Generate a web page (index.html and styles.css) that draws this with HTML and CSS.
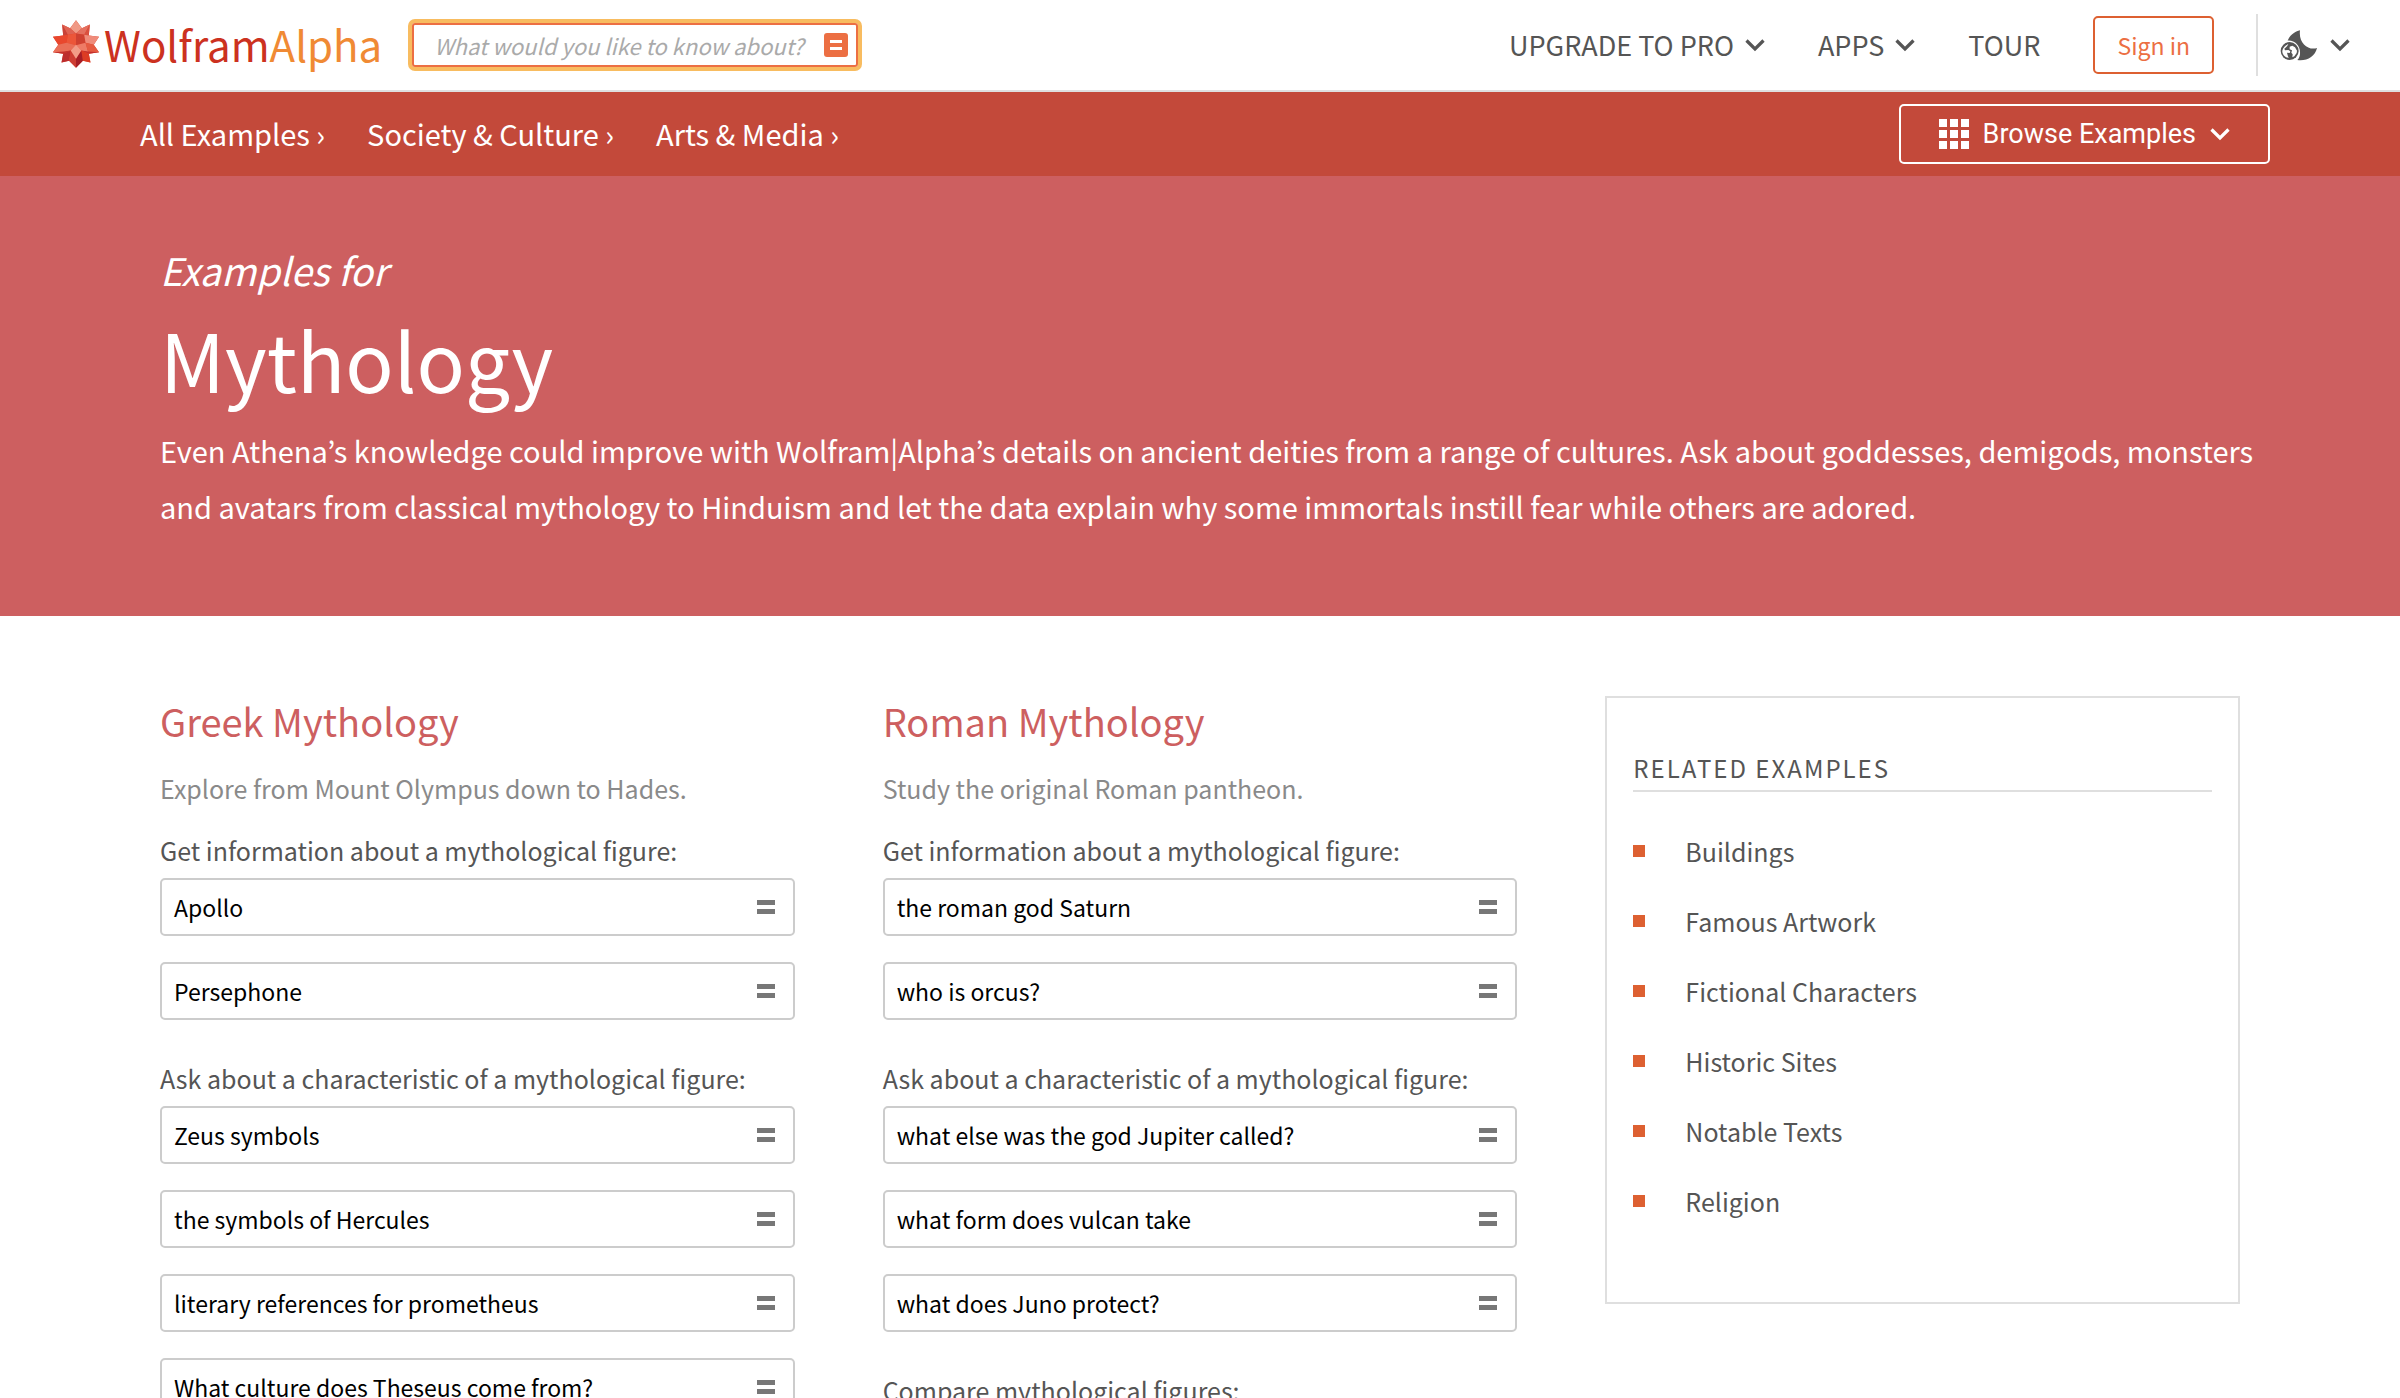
FILE: index.html
```html
<!DOCTYPE html>
<html lang="en">
<head>
<meta charset="utf-8">
<meta name="viewport" content="width=device-width, initial-scale=1">
<title>Wolfram|Alpha Examples: Mythology</title>
<link rel="stylesheet" href="styles.css">
</head>
<body>
<svg class="symbols" width="0" height="0" aria-hidden="true">
  <symbol id="chevron" viewBox="0 0 20 14"><path d="M1.5 2.5 10 11l8.500-8.500" fill="none" stroke="currentColor" stroke-width="3.200"/></symbol>
  <symbol id="equals" viewBox="0 0 18 14"><path d="M0 0h18v5H0zM0 9h18v5H0z" fill="currentColor"/></symbol>
</svg>

<header class="site-header">
  <a class="logo" href="#" aria-label="WolframAlpha">
    <svg class="logo-star" viewBox="10 9 146 150" aria-hidden="true">
      <path fill="#de4630" d="M83 12 101 36 125 25 122 58 153 62 137 86 153 109 122 114 127 140 104 135 83 156 62 135 39 140 44 114 13 109 29 86 13 62 44 58 41 25 65 36z"/>
      <path fill="#f09985" d="M83 12 101 36 83 52 65 36z"/>
      <path fill="#e4705f" d="M125 25 101 36 83 52 108 56z"/>
      <path fill="#d9503f" d="M125 25 122 58 108 56z"/>
      <path fill="#df6252" d="M41 25 65 36 83 52 58 56z"/>
      <path fill="#c94238" d="M41 25 44 58 58 56z"/>
      <path fill="#cf4131" d="M83 52 108 56 112 80 83 88z"/>
      <path fill="#ec5639" d="M83 52 58 56 54 80 83 88z"/>
      <path fill="#ef8b7a" d="M153 62 122 58 108 56 112 80 137 86z"/>
      <path fill="#e9472d" d="M13 62 44 58 58 56 54 80 29 86z"/>
      <path fill="#ea6f58" d="M54 80 83 88 67 104 46 109 13 109 29 86z"/>
      <path fill="#ee7b66" d="M112 80 83 88 99 104 120 109z"/>
      <path fill="#e55a41" d="M112 80 137 86 153 109 120 109z"/>
      <path fill="#c4312c" d="M153 109 122 114 99 104 120 107z"/>
      <path fill="#c4312c" d="M13 109 44 114 67 104 46 107z"/>
      <path fill="#dc3c24" d="M127 140 122 114 99 104 104 135z"/>
      <path fill="#bc2d2d" d="M39 140 44 114 67 104 62 135z"/>
      <path fill="#cd3d33" d="M83 156 62 135 67 104 83 128z"/>
      <path fill="#a61e26" d="M83 156 104 135 99 104 83 128z"/>
      <path fill="#f29c88" d="M83 86 99 104 83 129 67 104z"/>
    </svg>
    <span class="logo-text">Wolfram<span class="logo-alpha">Alpha</span></span>
  </a>

  <form class="search" role="search">
    <label class="visually-hidden" for="q">Search</label>
    <input class="search-input" id="q" type="text" placeholder="What would you like to know about?">
    <button class="search-go" type="button" aria-label="Compute">
      <svg width="12" height="10" viewBox="0 0 12 10"><path d="M0 0h12v3H0zM0 7h12v3H0z" fill="#fff"/></svg>
    </button>
  </form>

  <nav class="site-nav" aria-label="Main">
    <button class="nav-item" type="button">UPGRADE TO PRO<svg class="chevron"><use href="#chevron"/></svg></button>
    <button class="nav-item" type="button">APPS<svg class="chevron"><use href="#chevron"/></svg></button>
    <a class="nav-item" href="#">TOUR</a>
    <a class="sign-in" href="#">Sign in</a>
    <button class="theme" type="button" aria-label="Theme and language">
      <svg class="theme-icon" viewBox="33 28 114 93">
        <path d="M93 29C72 35 62 46 56 60 80 58 98 80 92 106 90 112 88 115 85 118 113 122 138 108 144 82 118 90 88 68 93 29z" fill="currentColor"/>
        <circle cx="62" cy="91" r="27" fill="currentColor"/>
        <path d="M40 90C42 80 50 72 58 71L54 77 46 84 48 89 58 88 64 92 62 97 54 96 56 104 59 112C48 110 39 101 40 90zM62 78 70 75 78 80 84 90 83 97 76 107 70 110 71 101 67 96 69 89 62 86z" fill="#fff"/>
      </svg>
      <svg class="chevron"><use href="#chevron"/></svg>
    </button>
  </nav>
</header>

<div class="crumb-bar">
  <nav class="crumbs" aria-label="Breadcrumb">
    <a href="#">All Examples ›</a>
    <a href="#">Society &amp; Culture ›</a>
    <a href="#">Arts &amp; Media ›</a>
  </nav>
  <button class="browse" type="button">
    <svg width="30" height="30" viewBox="0 0 30 30" fill="currentColor" aria-hidden="true"><path d="M0 0h8v8H0zM11 0h8v8h-8zM22 0h8v8h-8zM0 11h8v8H0zM11 11h8v8h-8zM22 11h8v8h-8zM0 22h8v8H0zM11 22h8v8h-8zM22 22h8v8h-8z"/></svg>
    <span>Browse Examples</span>
    <svg class="chevron"><use href="#chevron"/></svg>
  </button>
</div>

<section class="hero">
  <h1 class="hero-title"><span class="hero-kicker">Examples for</span> Mythology</h1>
  <p class="hero-text">Even Athena’s knowledge could improve with Wolfram|Alpha’s details on ancient deities from a range of cultures. Ask about goddesses, demigods, monsters and avatars from classical mythology to Hinduism and let the data explain why some immortals instill fear while others are adored.</p>
</section>

<main class="content">
  <section class="topic">
    <h2>Greek Mythology</h2>
    <p class="topic-note">Explore from Mount Olympus down to Hades.</p>
    <div class="group">
      <h3>Get information about a mythological figure:</h3>
      <a class="query" href="#">Apollo<svg class="equals"><use href="#equals"/></svg></a>
      <a class="query" href="#">Persephone<svg class="equals"><use href="#equals"/></svg></a>
    </div>
    <div class="group">
      <h3>Ask about a characteristic of a mythological figure:</h3>
      <a class="query" href="#">Zeus symbols<svg class="equals"><use href="#equals"/></svg></a>
      <a class="query" href="#">the symbols of Hercules<svg class="equals"><use href="#equals"/></svg></a>
      <a class="query" href="#">literary references for prometheus<svg class="equals"><use href="#equals"/></svg></a>
      <a class="query" href="#">What culture does Theseus come from?<svg class="equals"><use href="#equals"/></svg></a>
    </div>
  </section>

  <section class="topic">
    <h2>Roman Mythology</h2>
    <p class="topic-note">Study the original Roman pantheon.</p>
    <div class="group">
      <h3>Get information about a mythological figure:</h3>
      <a class="query" href="#">the roman god Saturn<svg class="equals"><use href="#equals"/></svg></a>
      <a class="query" href="#">who is orcus?<svg class="equals"><use href="#equals"/></svg></a>
    </div>
    <div class="group">
      <h3>Ask about a characteristic of a mythological figure:</h3>
      <a class="query" href="#">what else was the god Jupiter called?<svg class="equals"><use href="#equals"/></svg></a>
      <a class="query" href="#">what form does vulcan take<svg class="equals"><use href="#equals"/></svg></a>
      <a class="query" href="#">what does Juno protect?<svg class="equals"><use href="#equals"/></svg></a>
    </div>
    <div class="group">
      <h3>Compare mythological figures:</h3>
    </div>
  </section>

  <aside class="related">
    <h2>RELATED EXAMPLES</h2>
    <ul>
      <li><a href="#">Buildings</a></li>
      <li><a href="#">Famous Artwork</a></li>
      <li><a href="#">Fictional Characters</a></li>
      <li><a href="#">Historic Sites</a></li>
      <li><a href="#">Notable Texts</a></li>
      <li><a href="#">Religion</a></li>
    </ul>
  </aside>
</main>
</body>
</html>
```
FILE: styles.css
```css
* { box-sizing: border-box; }

body {
  margin: 0;
  background: #fff;
  color: #555;
  font-family: "Noto Sans CJK KR", "Noto Sans", sans-serif;
  font-size: 25px;
  line-height: 40px;
}

a { color: inherit; text-decoration: none; }

button {
  margin: 0;
  padding: 0;
  border: 0;
  background: none;
  color: inherit;
  font: inherit;
  cursor: pointer;
}

h1, h2, h3, p, ul { margin: 0; padding: 0; font-weight: 400; }

.symbols { position: absolute; }

.visually-hidden {
  position: absolute;
  width: 1px;
  height: 1px;
  overflow: hidden;
  clip-path: inset(50%);
}

.chevron { width: 20px; height: 14px; flex: none; }

/* Top bar */
.site-header {
  display: flex;
  align-items: center;
  min-height: 92px;
  padding: 0 50px 0 52px;
  border-bottom: 2px solid #dfdfdf;
}

.logo {
  display: flex;
  align-items: center;
  gap: 4px;
  padding-bottom: 2px;
  color: #cc3120;
  font-size: 42px;
  line-height: 60px;
}

.logo-star { width: 48px; height: 50px; }
.logo-alpha { color: #f08a34; }

.search {
  display: flex;
  align-items: center;
  width: 446px;
  height: 44px;
  margin-left: 30px;
  padding: 0 8px 0 20px;
  border: 2px solid #ec6f43;
  border-radius: 3px;
  box-shadow: 0 0 0 4px #f8bc60;
}

.search-input {
  flex: 1;
  min-width: 0;
  height: 40px;
  padding: 0;
  border: 0;
  outline: 0;
  background: none;
  color: #555;
  font: italic 22px/40px "Noto Sans CJK KR", "Noto Sans", sans-serif;
}

.search-input::placeholder { color: #aaa; opacity: 1; }

.search-go {
  display: grid;
  place-items: center;
  width: 24px;
  height: 24px;
  border-radius: 3px;
  background: #ec6f43;
}

.site-nav {
  display: flex;
  align-items: center;
  gap: 53px;
  margin-left: auto;
  font-size: 27px;
}

.nav-item { display: flex; align-items: center; gap: 11px; }

.sign-in {
  padding: 7px 22px;
  border: 2px solid #dd6031;
  border-radius: 5px;
  color: #ec6f43;
  font-size: 23px;
}

.theme {
  display: flex;
  align-items: center;
  gap: 12px;
  height: 62px;
  margin-left: -11px;
  padding-left: 22px;
  border-left: 2px solid #dfdfdf;
}

.theme-icon { width: 38px; height: 31px; }

/* Breadcrumbs */
.crumb-bar {
  display: flex;
  align-items: center;
  justify-content: space-between;
  min-height: 84px;
  padding: 0 130px 0 140px;
  background: #c3493a;
  color: #fff;
}

.crumbs {
  display: flex;
  gap: 42px;
  padding-bottom: 2px;
  font-size: 29px;
}

.browse {
  display: flex;
  align-items: center;
  gap: 14px;
  height: 60px;
  padding: 0 38px;
  border: 2px solid #fff;
  border-radius: 5px;
  font: 27px/40px Roboto, sans-serif;
}

/* Hero */
.hero {
  padding: 66px 130px 82px 160px;
  background: #cd5f60;
  color: #fff;
}

.hero-title { font-size: 80px; line-height: 120px; }

.hero-kicker {
  display: block;
  font-size: 38px;
  font-style: italic;
  line-height: 56px;
}

.hero-text { margin-top: 4px; font-size: 29px; line-height: 56px; }

/* Columns */
.content {
  display: grid;
  grid-template-columns: repeat(3, minmax(0, 1fr));
  align-items: start;
  gap: 88px;
  padding: 80px 160px;
}

.topic h2 { color: #cd5f60; font-size: 38px; line-height: 50px; }
.topic-note { margin-top: 22px; color: #8a8a8a; }

.group { display: grid; gap: 26px; margin-top: 38px; }
.topic-note + .group { margin-top: 22px; }

.group h3 { margin-bottom: -18px; font-size: 25px; line-height: 40px; }

.query {
  display: flex;
  align-items: center;
  justify-content: space-between;
  min-height: 58px;
  padding: 0 18px 0 12px;
  border: 2px solid #ccc;
  border-radius: 5px;
  color: #000;
  font-size: 23px;
}

.equals { width: 18px; height: 14px; color: #777; }

.related {
  padding: 50px 26px 66px;
  border: 2px solid #dfdfdf;
}

.related h2 {
  padding-bottom: 2px;
  border-bottom: 2px solid #dfdfdf;
  font-size: 24px;
  letter-spacing: 2px;
}

.related ul { padding-top: 24px; list-style: none; }

.related li {
  display: flex;
  align-items: center;
  gap: 40px;
  line-height: 70px;
}

.related li::before {
  content: "";
  width: 12px;
  height: 12px;
  background: #dd6031;
}
```
